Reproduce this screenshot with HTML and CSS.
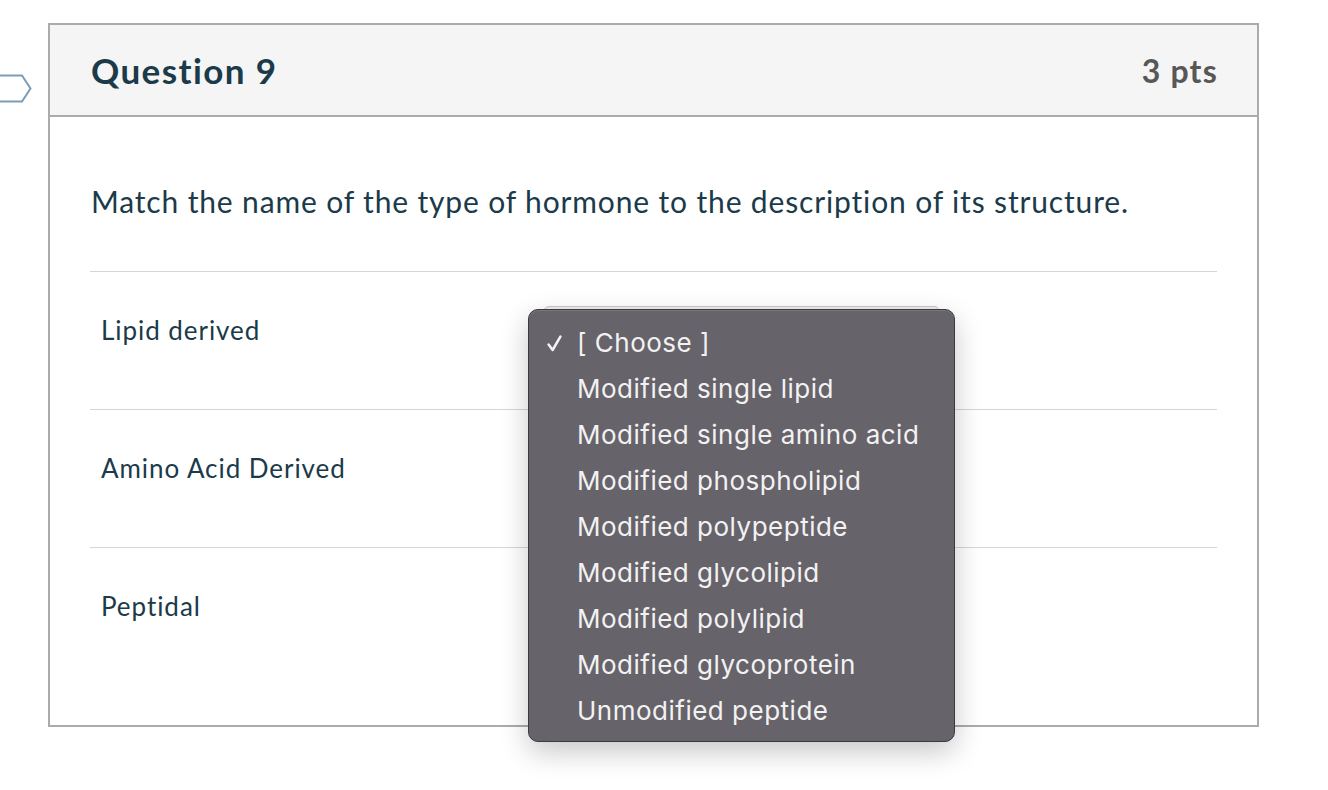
FILE: index.html
```html
<!DOCTYPE html>
<html>
<head>
<meta charset="utf-8">
<link rel="stylesheet" href="styles.css">
</head>
<body>
<div class="page">
  <div class="gutter">
    <svg class="flag" width="34" height="30" viewBox="0 0 34 30">
      <polygon points="-6,1.5 22,1.5 30.5,14.5 22,27.5 -6,27.5" fill="#fff" stroke="#7d9bb5" stroke-width="2"/>
    </svg>
  </div>
  <div class="card">
    <div class="card-header">
      <h2 class="q-title">Question 9</h2>
      <span class="q-pts">3 pts</span>
    </div>
    <div class="card-body">
      <p class="q-text">Match the name of the type of hormone to the description of its structure.</p>
      <div class="rows">
        <div class="row">
          <span class="label">Lipid derived</span>
          <div class="select"></div>
        </div>
        <div class="row">
          <span class="label">Amino Acid Derived</span>
          <div class="select"></div>
        </div>
        <div class="row">
          <span class="label">Peptidal</span>
          <div class="select"></div>
        </div>
      </div>
    </div>
  </div>
  <ul class="menu">
    <li class="item"><svg class="check" width="15" height="17" viewBox="0 0 15 17"><path d="M1.6 9.6 L5.6 15 L13.4 1.6" fill="none" stroke="#f2f2f2" stroke-width="2.5" stroke-linecap="round" stroke-linejoin="round"/></svg>[ Choose ]</li>
    <li class="item">Modified single lipid</li>
    <li class="item">Modified single amino acid</li>
    <li class="item">Modified phospholipid</li>
    <li class="item">Modified polypeptide</li>
    <li class="item">Modified glycolipid</li>
    <li class="item">Modified polylipid</li>
    <li class="item">Modified glycoprotein</li>
    <li class="item">Unmodified peptide</li>
  </ul>
</div>
</body>
</html>
```

FILE: styles.css
```css
* { box-sizing: border-box; }
html, body {
  margin: 0;
  padding: 0;
  background: #fff;
  font-family: Lato, "Open Sans", sans-serif;
  color: #1f3b4a;
}
.page {
  position: relative;
  display: flex;
  padding-top: 23px;
  width: 1328px;
  height: 790px;
}
.gutter {
  width: 48px;
  flex: none;
}
.flag {
  display: block;
  margin-top: 51px;
}
.card {
  width: 1211px;
  flex: none;
  align-self: flex-start;
  border: 2px solid #ababab;
}
.card-header {
  height: 92px;
  background: #f5f5f5;
  border-bottom: 2px solid #ababab;
  display: flex;
  align-items: center;
  justify-content: space-between;
  padding: 0 40px 0 41px;
}
.q-title {
  margin: 0;
  font-size: 35px;
  letter-spacing: 1.4px;
  font-weight: 700;
  color: #1b3a4a;
}
.q-pts {
  font-size: 32px;
  letter-spacing: 1.2px;
  margin-right: -1px;
  font-weight: 700;
  color: #575757;
}
.card-body {
  padding: 0 40px 40px 40px;
}
.q-text {
  margin: 66px 0 52px 1px;
  font-size: 30px;
  letter-spacing: 0.85px;
  line-height: 36px;
  color: #1b3a4a;
}
.row {
  height: 138px;
  border-top: 1px solid #d6d6d6;
  display: flex;
  align-items: flex-start;
  padding: 43px 0 0 11px;
  position: relative;
}
.label {
  width: 442px;
  font-size: 26px;
  letter-spacing: 0.95px;
  line-height: 30px;
  color: #1b3a4a;
}
.select {
  margin-top: -9px;
  width: 397px;
  height: 42px;
  border: 1px solid #c9c9c9;
  border-radius: 6px;
  background: #efefef;
}
.menu {
  position: absolute;
  left: 528px;
  top: 309px;
  width: 427px;
  height: 433px;
  margin: 0;
  padding: 10px 0 0 0;
  list-style: none;
  background: #67636a;
  border: 1px solid #3c3a3e;
  border-radius: 10px;
  box-shadow: 0 10px 28px rgba(0,0,0,0.22), inset 0 1px 0 rgba(255,255,255,0.12);
}
.item {
  position: relative;
  height: 46px;
  line-height: 46px;
  padding-left: 48px;
  font-family: Inter, "Liberation Sans", sans-serif;
  font-size: 26px;
  letter-spacing: 0.5px;
  color: #f2f2f2;
  white-space: nowrap;
}
.check {
  position: absolute;
  left: 18px;
  top: 15px;
}
```
